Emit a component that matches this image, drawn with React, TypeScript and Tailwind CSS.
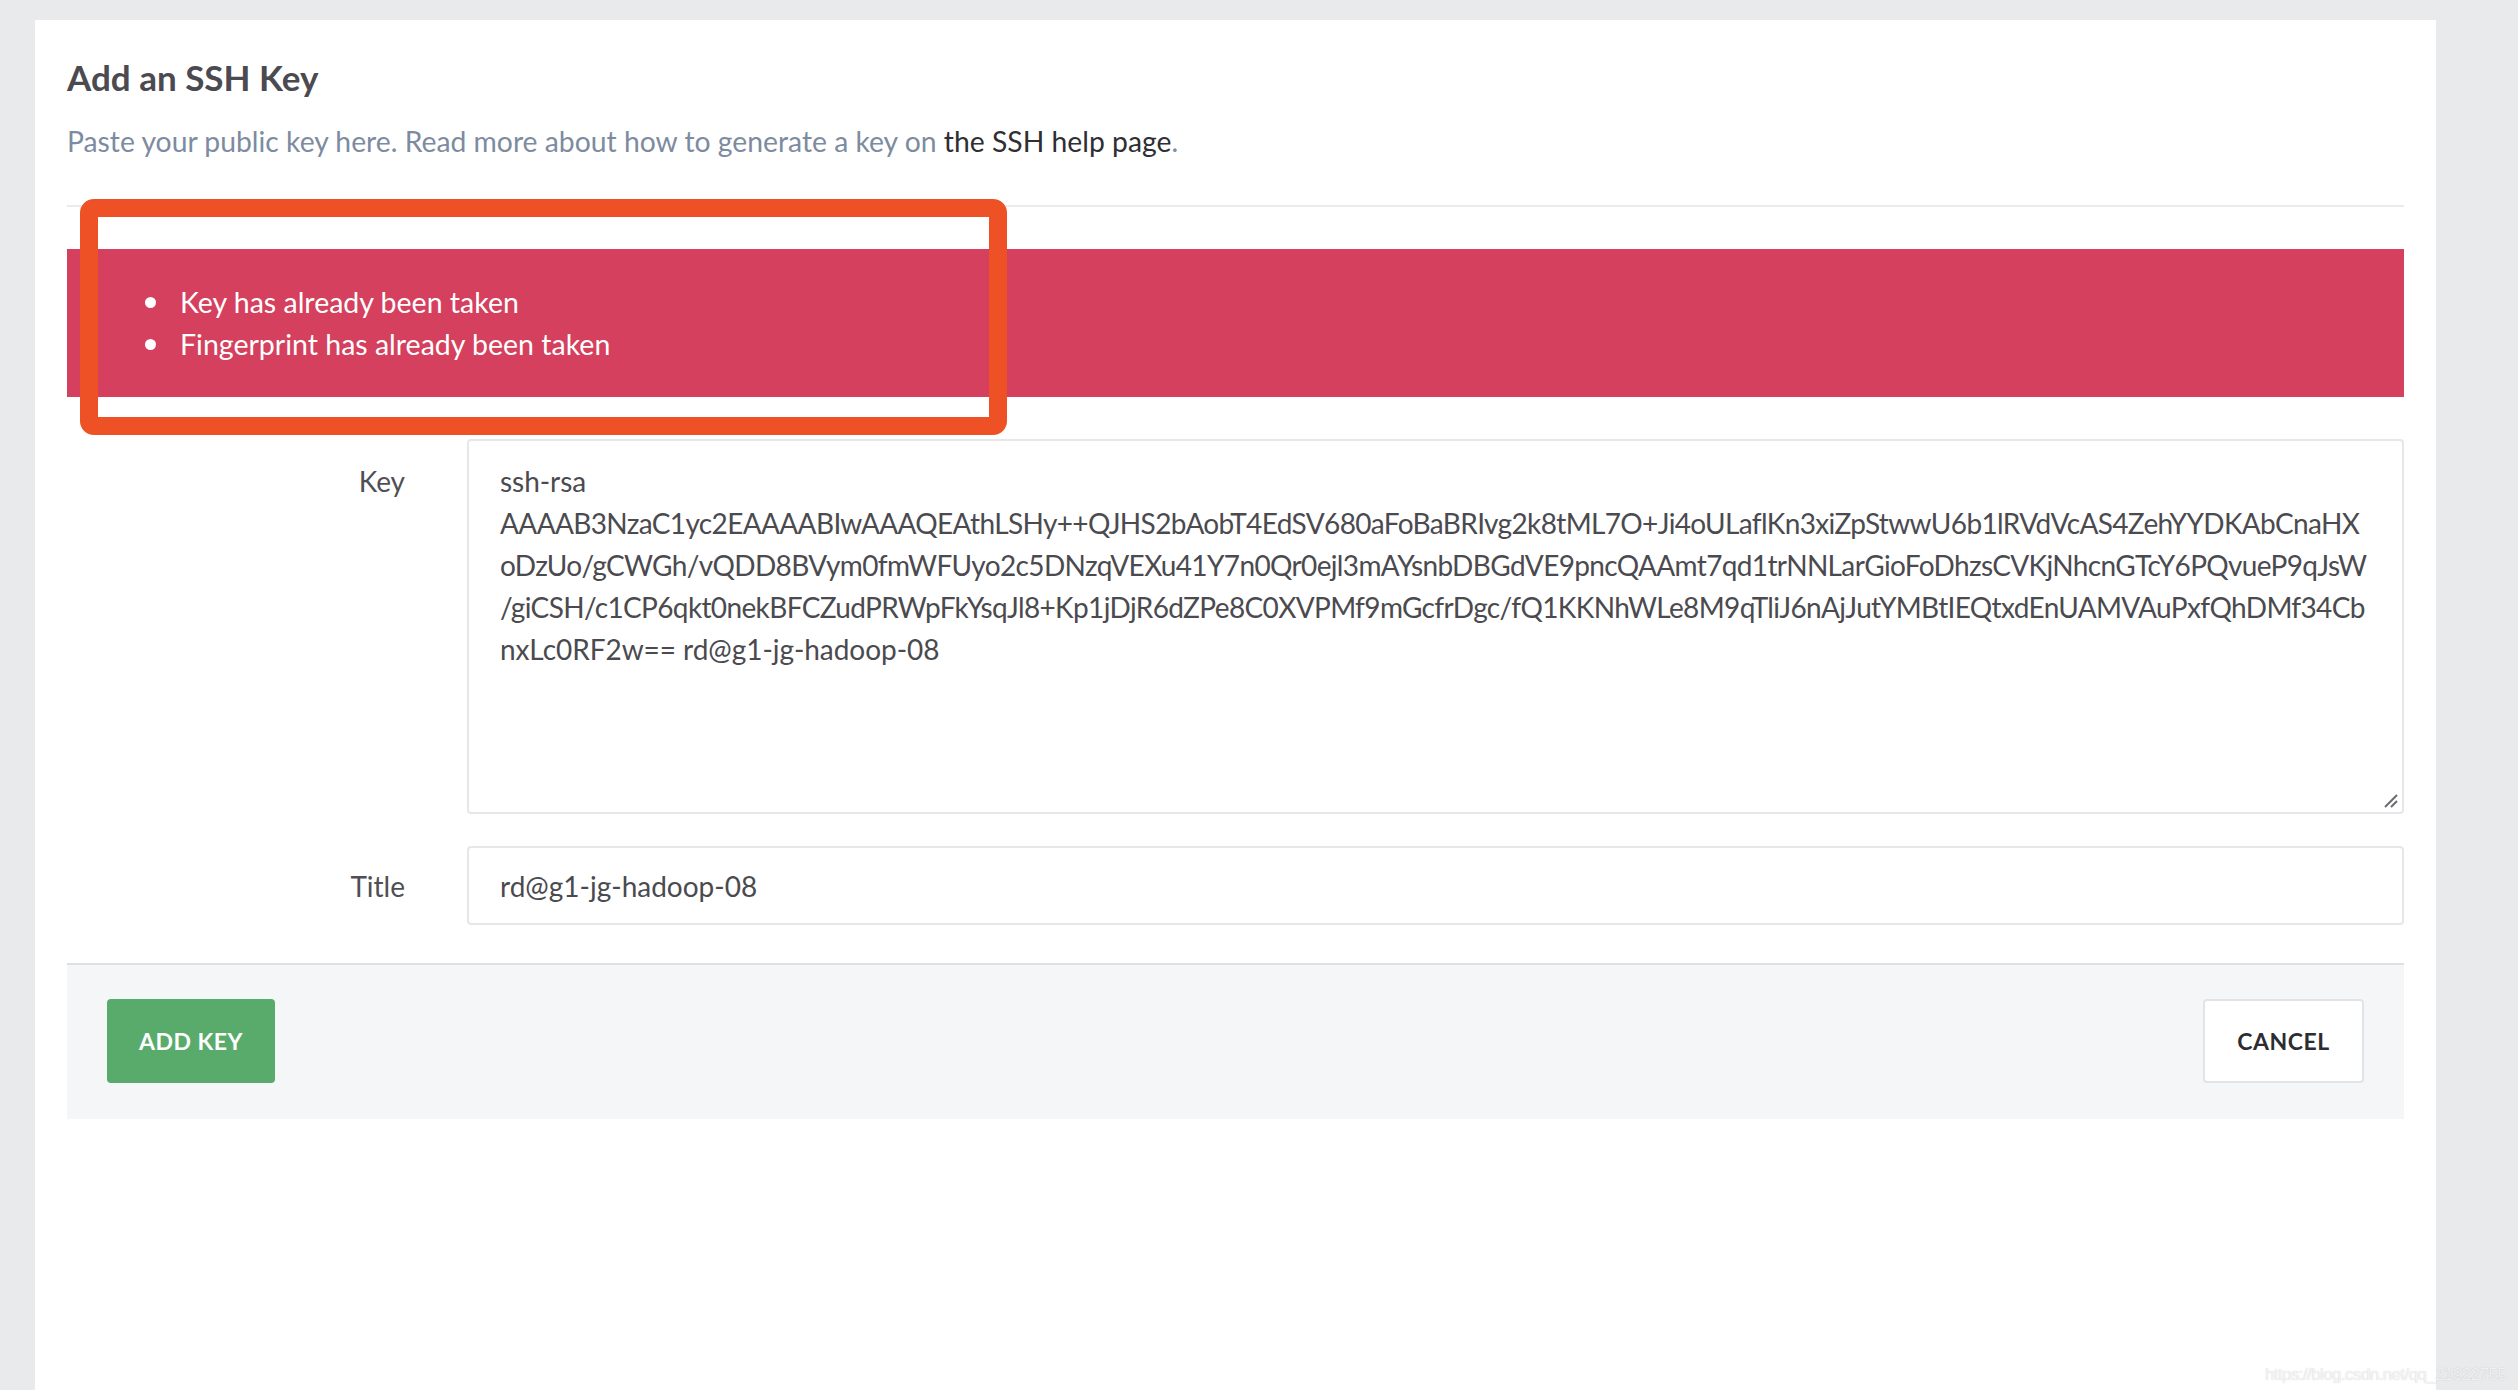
const keyLines = [
  'ssh-rsa',
  'AAAAB3NzaC1yc2EAAAABIwAAAQEAthLSHy++QJHS2bAobT4EdSV680aFoBaBRIvg2k8tML7O+Ji4oULaflKn3xiZpStwwU6b1lRVdVcAS4ZehYYDKAbCnaHX',
  'oDzUo/gCWGh/vQDD8BVym0fmWFUyo2c5DNzqVEXu41Y7n0Qr0ejl3mAYsnbDBGdVE9pncQAAmt7qd1trNNLarGioFoDhzsCVKjNhcnGTcY6PQvueP9qJsW',
  '/giCSH/c1CP6qkt0nekBFCZudPRWpFkYsqJl8+Kp1jDjR6dZPe8C0XVPMf9mGcfrDgc/fQ1KKNhWLe8M9qTliJ6nAjJutYMBtIEQtxdEnUAMVAuPxfQhDMf34Cb',
  'nxLc0RF2w== rd@g1-jg-hadoop-08',
]

const errors = ['Key has already been taken', 'Fingerprint has already been taken']

export default function App() {
  return (
    <div className="relative min-h-screen bg-[#e9eaec] pt-[20px] pl-[35px] pr-[82px] font-['Lato',sans-serif]">
      <div className="min-h-[1370px] bg-white px-[32px] pt-[35px]">
        {/* Header */}
        <h1 className="text-[35px] leading-[44px] font-bold text-[#4a4a50]">Add an SSH Key</h1>
        <p className="mt-[22px] text-[28.3px] leading-[40px] text-[#7d8ba0]">
          Paste your public key here. Read more about how to generate a key on{' '}
          <a className="text-[#2e2e33]">the SSH help page</a>.
        </p>
        <div className="mt-[44px] h-[2px] bg-[#ebebed]" />

        {/* Errors */}
        <div className="mt-[42px] bg-[#d4405d] py-[32px] pl-[78px] text-white">
          {errors.map((e) => (
            <div key={e} className="flex items-center text-[28.5px] leading-[42px]">
              <span className="h-[11px] w-[11px] rounded-full bg-white" />
              <span className="ml-[24px]">{e}</span>
            </div>
          ))}
        </div>

        {/* Form */}
        <div className="mt-[42px] flex">
          <label className="w-[400px] shrink-0 pr-[62px] pt-[21px] text-right text-[28px] leading-[42px] text-[#4f4f55]">
            Key
          </label>
          <div className="relative h-[375px] min-w-0 flex-1 overflow-hidden rounded-[4px] border-2 border-[#e6e7eb] pl-[31px] pt-[19px] text-[28px] leading-[42px] text-[#4a4a4f]">
            {keyLines.map((l, i) => (
              <div
                key={i}
                className={`whitespace-nowrap ${i === 0 || i === keyLines.length - 1 ? 'tracking-[-0.05px]' : 'tracking-[-0.64px]'}`}
              >
                {l}
              </div>
            ))}
            <svg className="absolute bottom-[3px] right-[3px] h-[16px] w-[16px]" viewBox="0 0 16 16">
              <path d="M14 2 L2 14 M14 8 L8 14" stroke="#6b6b70" strokeWidth="2" />
            </svg>
          </div>
        </div>
        <div className="mt-[32px] flex">
          <label className="flex w-[400px] shrink-0 items-center justify-end pr-[62px] text-[28px] leading-[42px] text-[#4f4f55]">
            Title
          </label>
          <div className="flex h-[79px] min-w-0 flex-1 items-center rounded-[4px] border-2 border-[#e6e7eb] pl-[31px] text-[28px] leading-[42px] text-[#4a4a4f]">
            rd@g1-jg-hadoop-08
          </div>
        </div>

        {/* Footer */}
        <div className="mt-[38px] flex items-center justify-between border-t-2 border-[#dfe0e3] bg-[#f5f6f8] px-[40px] pt-[34px] pb-[36px]">
          <button className="h-[84px] w-[168px] rounded-[4px] bg-[#59ab6c] text-[23px] font-bold tracking-[0.5px] text-white">
            ADD KEY
          </button>
          <button className="h-[84px] w-[161px] rounded-[4px] border-2 border-[#e2e3e8] bg-white text-[23px] font-bold tracking-[0.5px] text-[#2c2c31]">
            CANCEL
          </button>
        </div>
      </div>

      {/* annotation box */}
      <div className="absolute left-[80px] top-[199px] h-[236px] w-[927px] rounded-[14px] border-[18px] border-[#ee5125]" />

      {/* watermark */}
      <div className="absolute left-[2265px] top-[1362px] font-['Liberation_Sans',sans-serif] text-[17px] tracking-[-0.6px] text-white/80 [text-shadow:0_0_1px_rgba(0,0,0,0.25)]">
        https://blog.csdn.net/qq_21922755
      </div>
    </div>
  )
}
